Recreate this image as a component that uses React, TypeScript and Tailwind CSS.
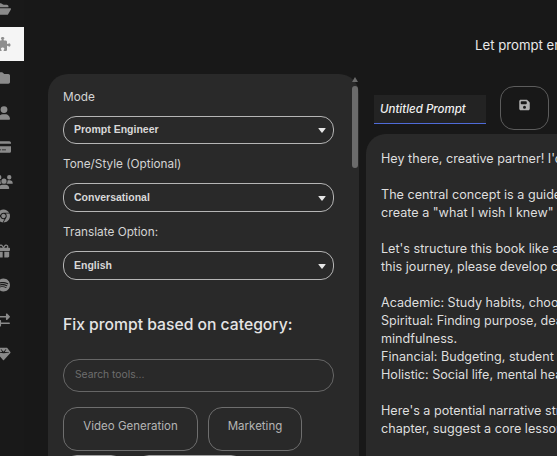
import React from "react";
import { FaFolderOpen, FaPuzzlePiece, FaFolder, FaUser, FaCreditCard, FaUsers, FaChrome, FaGift, FaSpotify, FaRightLeft, FaGem, FaFloppyDisk } from "react-icons/fa6";

const icons = [
  { I: FaFolderOpen, w: "w-[15px]" },
  { I: FaPuzzlePiece, w: "w-[15px]", active: true },
  { I: FaFolder, w: "w-[13px]" },
  { I: FaUser, w: "w-[12px]" },
  { I: FaCreditCard, w: "w-[15px]" },
  { I: FaUsers, w: "w-[18px]" },
  { I: FaChrome, w: "w-[13px]" },
  { I: FaGift, w: "w-[13px]" },
  { I: FaSpotify, w: "w-[13px]" },
  { I: FaRightLeft, w: "w-[13px]" },
  { I: FaGem, w: "w-[15px]" },
];

const lines = [
  "Hey there, creative partner! I'd love your help with a book idea today.",
  "",
  "The central concept is a guide for first-year university students, and I want to",
  "create a \"what I wish I knew\" resource that feels honest and warm.",
  "",
  "Let's structure this book like a mentor walking beside the reader. To support",
  "this journey, please develop content across these four areas of student life:",
  "",
  "Academic: Study habits, choosing courses, and time management.",
  "Spiritual: Finding purpose, dealing with doubt, and the practice of",
  "mindfulness.",
  "Financial: Budgeting, student loans, and part-time work.",
  "Holistic: Social life, mental health, sleep, and exercise.",
  "",
  "Here's a potential narrative structure for the book to start from. For each",
  "chapter, suggest a core lesson and one story that brings it to life.",
];

function Field({ label, value, h, mt }: { label: string; value: string; h: string; mt: string }) {
  return (
    <div className={mt}>
      <div className="text-[11.8px] leading-[18px] text-[#d4d4d4]">{label}</div>
      <div className="relative mt-[10px] w-[271px]">
        <select
          defaultValue={value}
          className={`block w-full appearance-none rounded-[13px] border border-[#b5b5b5] bg-[#292929] pl-[10px] pr-[20px] font-['Liberation_Sans',sans-serif] text-[10.5px] font-bold text-[#d8d8d8] ${h}`}
        >
          <option>{value}</option>
        </select>
        <span className="pointer-events-none absolute right-[8px] top-1/2 -mt-[2px] h-0 w-0 rounded-[1px] border-x-[4px] border-t-[5px] border-x-transparent border-t-[#e6e6e6]" />
      </div>
    </div>
  );
}

export default function App() {
  return (
    <div className="flex h-[456px] w-[557px] overflow-hidden bg-[#181818] font-['Inter',sans-serif]">
      <nav className="w-[24px] shrink-0 bg-[#191919]">
        <div className="-mt-[8px]">
          {icons.map(({ I, w, active }, i) => (
            <div
              key={i}
              className={`flex h-[34.5px] w-[24px] items-center ${active ? "bg-[#f5f5f5] text-[#8f8f8f]" : "text-[#8a8a8a]"}`}
            >
              <div className="flex w-[7px] justify-center">
                <I className={`h-[14px] shrink-0 ${w}`} />
              </div>
            </div>
          ))}
        </div>
      </nav>

      <main className="min-w-0 flex-1">
        <header className="h-[74px] pl-[451px] pt-[36px] text-[13.2px] leading-[18px] text-[#e8e8e8] whitespace-nowrap">
          Let prompt engineering do the heavy lifting for you
        </header>
        <div className="flex h-[382px] pl-[24px]">
          <section className="relative h-[460px] w-[311px] shrink-0 rounded-t-[20px] bg-[#292929] pl-[15px] pt-[14px]">
            <Field label="Mode" value="Prompt Engineer" h="h-[28px]" mt="" />
            <Field label="Tone/Style (Optional)" value="Conversational" h="h-[29px]" mt="mt-[11px]" />
            <Field label="Translate Option:" value="English" h="h-[29px]" mt="mt-[11px]" />
            <h2 className="mt-[34px] text-[15.7px] font-medium leading-[22px] text-[#e4e4e4]">Fix prompt based on category:</h2>
            <input
              placeholder="Search tools..."
              className="mt-[23px] block h-[33px] w-[271px] rounded-[16px] border border-[#666666] bg-transparent px-[11px] pb-[3px] text-[10.3px] text-[#aaa] placeholder:text-[#6e6e6e]"
            />
            <div className="mt-[15px] flex w-[271px] flex-wrap gap-x-[10px] gap-y-[4px]">
              {[
                ["Video Generation", "w-[135px] border-[#6e6e6e]"],
                ["Marketing", "w-[94px] border-[#6e6e6e]"],
                ["Art", "w-[62px] border-[#a0a0a0]"],
                ["Content Writing", "w-[110px] border-[#a0a0a0]"],
              ].map(([t, w]) => (
                <button key={t} className={`h-[44px] rounded-[14px] border pb-[4px] text-[11.5px] text-[#b5b5b5] ${w}`}>
                  {t}
                </button>
              ))}
            </div>
            <div className="absolute right-[1px] top-[12px] h-[82px] w-[6px] rounded-[3px] bg-[#6b6b6b]" />
            <div className="absolute right-[1px] top-[3px] h-0 w-0 border-x-[3px] border-b-[5px] border-x-transparent border-b-[#6b6b6b]" />
          </section>

          <section className="ml-[7px] w-[400px] shrink-0">
            <div className="flex h-[60px] items-start pl-[8px] pt-[12px]">
              <input
                defaultValue="Untitled Prompt"
                className="mt-[9px] h-[29px] w-[112px] border-b border-[#4f6bd8] bg-[#232323] pl-[6px] text-[11.5px] font-medium italic text-[#f0f0f0]"
              />
              <button className="ml-[14px] flex h-[44px] w-[49px] items-center justify-center rounded-[14px] border border-[#5c5c5c] pb-[6px] text-[#b0b0b0]">
                <FaFloppyDisk className="h-[12px] w-[11px]" />
              </button>
            </div>
            <div className="h-[400px] rounded-t-[20px] bg-[#292929] pl-[15px] pt-[16px] text-[12.6px] leading-[18px] text-[#dedede] whitespace-nowrap">
              {lines.map((l, i) => (
                <div key={i} className="h-[18px]">{l}</div>
              ))}
            </div>
          </section>
        </div>
      </main>
    </div>
  );
}
